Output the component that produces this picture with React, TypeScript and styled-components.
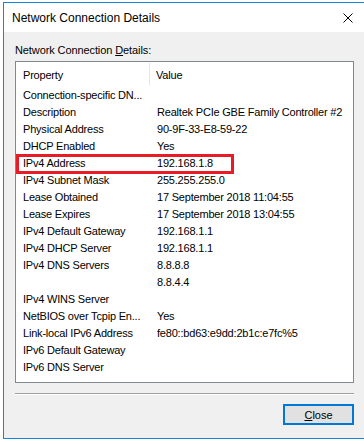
import React from 'react';
import styled, { createGlobalStyle } from 'styled-components';

const GlobalStyle = createGlobalStyle`
  html, body {
    margin: 0;
    padding: 0;
    background: #ffffff;
    overflow: hidden;
  }
  body {
    font-family: "Liberation Sans", Arial, sans-serif;
    color: #000;
  }
`;

const rows: [string, string][] = [
  ['Connection-specific DN...', ''],
  ['Description', 'Realtek PCIe GBE Family Controller #2'],
  ['Physical Address', '90-9F-33-E8-59-22'],
  ['DHCP Enabled', 'Yes'],
  ['IPv4 Address', '192.168.1.8'],
  ['IPv4 Subnet Mask', '255.255.255.0'],
  ['Lease Obtained', '17 September 2018 11:04:55'],
  ['Lease Expires', '17 September 2018 13:04:55'],
  ['IPv4 Default Gateway', '192.168.1.1'],
  ['IPv4 DHCP Server', '192.168.1.1'],
  ['IPv4 DNS Servers', '8.8.8.8'],
  ['', '8.8.4.4'],
  ['IPv4 WINS Server', ''],
  ['NetBIOS over Tcpip En...', 'Yes'],
  ['Link-local IPv6 Address', 'fe80::bd63:e9dd:2b1c:e7fc%5'],
  ['IPv6 Default Gateway', ''],
  ['IPv6 DNS Server', ''],
];

export default function App() {
  return (
    <Page>
      <GlobalStyle />
      <Window>
        <TitleBar>
          <Title>Network Connection Details</Title>
          <CloseGlyph width="10" height="10" viewBox="0 0 10 10">
            <path d="M0.5 0.5 L9.5 9.5 M9.5 0.5 L0.5 9.5" stroke="#000" strokeWidth="1" fill="none" />
          </CloseGlyph>
        </TitleBar>
        <Body>
          <Label>
            Network Connection <u>D</u>etails:
          </Label>
          <ListBox>
            <Header>
              <HeaderCell $first>Property</HeaderCell>
              <HeaderCell>Value</HeaderCell>
            </Header>
            {rows.map(([prop, value], i) => (
              <Row key={i}>
                <PropCell>{prop}</PropCell>
                <ValueCell>{value}</ValueCell>
                {prop === 'IPv4 Address' && <Highlight />}
              </Row>
            ))}
          </ListBox>
          <Separator />
          <Footer>
            <Button>
              <u>C</u>lose
            </Button>
          </Footer>
        </Body>
      </Window>
    </Page>
  );
}

const Page = styled.div`
  width: 364px;
  height: 444px;
  padding: 2px 0 0 3px;
  box-sizing: border-box;
  overflow: hidden;
`;

const Window = styled.div`
  width: 362px;
  height: 437px;
  box-sizing: border-box;
  border: 1px solid #1883d7;
  display: flex;
  flex-direction: column;
  background: #f0f0f0;
`;

const TitleBar = styled.div`
  height: 29px;
  flex: none;
  background: #ffffff;
  display: flex;
  align-items: center;
  justify-content: space-between;
  padding: 0 11px 0 8px;
`;

const Title = styled.span`
  font-size: 12px;
  line-height: 14px;
`;

const CloseGlyph = styled.svg`
  display: block;
  margin-top: 1px;
`;

const Body = styled.div`
  flex: 1;
  display: flex;
  flex-direction: column;
  padding: 12px 10px 0 11px;
`;

const Label = styled.div`
  font-size: 11px;
  line-height: 13px;
  height: 17px;
  letter-spacing: -0.1px;
  u {
    text-underline-offset: 1px;
  }
`;

const ListBox = styled.div`
  height: 322px;
  box-sizing: border-box;
  border: 1px solid #828790;
  background: #ffffff;
  display: flex;
  flex-direction: column;
  font-size: 11px;
  letter-spacing: -0.2px;
`;

const Header = styled.div`
  height: 25px;
  display: grid;
  grid-template-columns: 134px 1fr;
  align-items: stretch;
`;

const HeaderCell = styled.div<{ $first?: boolean }>`
  display: flex;
  align-items: center;
  padding-left: ${(p) => (p.$first ? '7px' : '6px')};
  padding-top: 1px;
  border-right: ${(p) => (p.$first ? '1px solid #e5e5e5' : 'none')};
  margin: 1px 0 2px;
`;

const Row = styled.div`
  position: relative;
  height: 17px;
  display: grid;
  grid-template-columns: 134px 1fr;
  align-items: center;
  line-height: 13px;
`;

const PropCell = styled.div`
  padding-left: 7px;
  white-space: nowrap;
  overflow: hidden;
`;

const ValueCell = styled.div`
  padding-left: 7px;
  white-space: nowrap;
`;

const Highlight = styled.div`
  position: absolute;
  left: 0;
  top: -1px;
  width: 218px;
  height: 20px;
  box-sizing: border-box;
  border: 3px solid #e81c24;
  pointer-events: none;
`;

const Separator = styled.div`
  margin-top: 10px;
  height: 0;
  border-top: 1px solid #a0a0a0;
  border-bottom: 1px solid #ffffff;
`;

const Footer = styled.div`
  display: flex;
  justify-content: flex-end;
  padding-top: 9px;
`;

const Button = styled.button`
  width: 71px;
  height: 21px;
  box-sizing: border-box;
  border: 2px solid #0078d7;
  background: #e1e1e1;
  font-family: "Liberation Sans", Arial, sans-serif;
  font-size: 11px;
  color: #000;
  padding: 0;
  display: flex;
  align-items: center;
  justify-content: center;
  u {
    text-underline-offset: 1px;
  }
`;
